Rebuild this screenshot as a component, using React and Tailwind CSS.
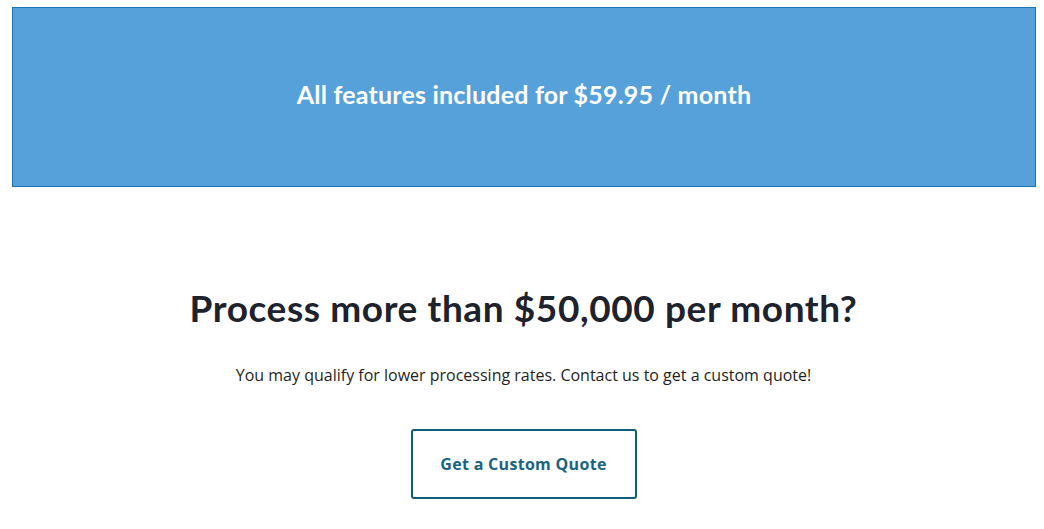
import React from 'react';

const App = () => {
  return (
    <div className="w-[1044px] h-[529px] bg-white overflow-hidden">
      <div className="pt-[7px] pl-[12px]">
        <div className="w-[1024px] h-[180px] bg-[#57a1da] border border-[#1a74b4] flex items-center justify-center">
          <h3 className="text-white text-[25px] font-bold tracking-[0.2px] font-['Lato',sans-serif] -mt-[4px]">
            All features included for $59.95 / month
          </h3>
        </div>
      </div>
      <section className="flex flex-col items-center pt-[99px] pl-[3px]">
        <h2 className="text-[#1e222d] text-[37px] font-bold leading-[44px] font-['Lato',sans-serif] tracking-[0.6px]">
          Process more than $50,000 per month?
        </h2>
        <p className="mt-[33px] text-[#1f1f1f] text-[16px] leading-[24px] font-['Open_Sans',sans-serif]">
          You may qualify for lower processing rates. Contact us to get a custom quote!
        </p>
        <button className="mt-[42px] w-[226px] h-[70px] border-2 border-[#0f5f7b] rounded-[3px] text-[#1a6381] text-[16px] font-bold tracking-[0.3px] font-['Open_Sans',sans-serif]">
          Get a Custom Quote
        </button>
      </section>
    </div>
  );
};

export default App;
